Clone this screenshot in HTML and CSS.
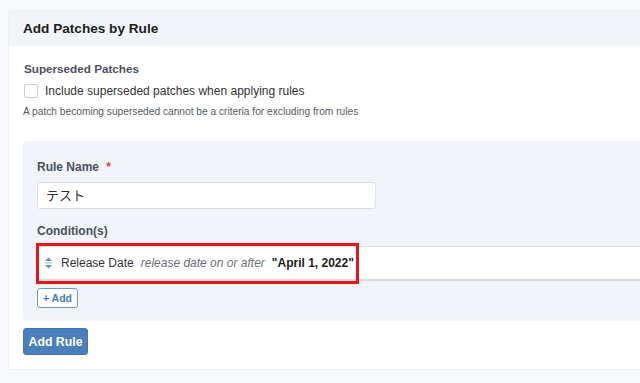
FILE: index.html
```html
<!DOCTYPE html>
<html lang="en">

<head>
    <meta charset="UTF-8">
    <meta name="viewport" content="width=device-width, initial-scale=1.0">
    <title>Add Patches by Rule</title>
    <link rel="stylesheet" href="styles.css">
</head>

<body>
    <div class="card">
        <div class="card-header">Add Patches by Rule</div>
        <div class="card-body">
            <div class="section-title">Superseded Patches</div>
            <label class="check-row">
                <span class="checkbox"></span>
                Include superseded patches when applying rules
            </label>
            <div class="help">A patch becoming superseded cannot be a criteria for excluding from rules</div>

            <div class="rule-panel">
                <div class="field-label">Rule Name <span class="required">*</span></div>
                <div class="text-input">テスト</div>

                <div class="field-label cond-label">Condition(s)</div>
                <div class="condition">
                    <svg class="sort-icon" width="9" height="12" viewBox="0 0 9 12">
                        <path d="M4.5 0.5 L8 4 L1 4 Z" fill="#5b8fd0"/>
                        <rect x="1" y="5.5" width="7" height="1" fill="#9dbbe3"/>
                        <path d="M1 8 L8 8 L4.5 11.5 Z" fill="#5b8fd0"/>
                    </svg>
                    <span class="cond-field">Release Date</span>
                    <span class="cond-op">release date on or after</span>
                    <span class="cond-value">"April 1, 2022"</span>
                    <div class="highlight"></div>
                </div>
                <button class="btn-add">+ Add</button>
            </div>

            <button class="btn-primary">Add Rule</button>
        </div>
    </div>
</body>

</html>
```

FILE: styles.css
```css
html, body {
    margin: 0;
    padding: 0;
    overflow: hidden;
}

body {
    background: #f8f9fc;
    font-family: "Liberation Sans", Arial, "Noto Sans CJK JP", sans-serif;
    color: #333;
    padding: 10px 0 0 8px;
}

.card {
    background: white;
    border: 1px solid #edf0f5;
    border-right: none;
    border-radius: 4px 0 0 4px;
    margin-right: -20px;
}

.card-header {
    background: #f1f4f8;
    height: 35px;
    line-height: 36px;
    padding-left: 14px;
    font-size: 13.6px;
    font-weight: bold;
    color: #1b1d21;
}

.card-body {
    padding: 15px 0 14px 14px;
}

.section-title {
    font-size: 11.7px;
    line-height: 16px;
    font-weight: bold;
    color: #4a5160;
    margin-left: 1px;
}

.check-row {
    display: flex;
    align-items: center;
    gap: 7px;
    margin-top: 5px;
    font-size: 12px;
    line-height: 18px;
    color: #333;
    margin-left: 1px;
}

.checkbox {
    width: 12px;
    height: 12px;
    border: 1px solid #c9ced6;
    border-radius: 2px;
    background: white;
}

.help {
    margin-top: 5px;
    font-size: 10.2px;
    line-height: 14px;
    color: #555b63;
}

.rule-panel {
    margin-top: 22px;
    background: #f1f4f8;
    border-radius: 4px 0 0 4px;
    padding: 18px 0 13px 14px;
}

.field-label {
    font-size: 12px;
    line-height: 16px;
    font-weight: bold;
    color: #4a5160;
}

.required {
    color: #e0413f;
    margin-left: 4px;
}

.text-input {
    margin-top: 7px;
    width: 329px;
    height: 25px;
    line-height: 25px;
    padding-left: 8px;
    background: white;
    border: 1px solid #dbe1ea;
    border-radius: 3px;
    font-size: 13px;
    color: #333;
}

.cond-label {
    margin-top: 14px;
}

.condition {
    position: relative;
    margin-top: 7px;
    height: 32px;
    background: white;
    border-top: 1px solid #dde3ea;
    border-bottom: 2px solid #d5dce6;
    display: flex;
    align-items: center;
    padding-left: 7px;
    font-size: 12px;
    white-space: nowrap;
}

.sort-icon {
    margin-right: 8px;
}

.cond-field {
    color: #333;
    margin-right: 7px;
}

.cond-op {
    font-style: italic;
    color: #6b7079;
    margin-right: 7px;
}

.cond-value {
    font-weight: bold;
    color: #1b1d21;
}

.highlight {
    position: absolute;
    left: -1px;
    top: -4px;
    width: 317px;
    height: 35px;
    border: 3px solid #e8141a;
    pointer-events: none;
}

.btn-add {
    display: block;
    margin-top: 7px;
    height: 20px;
    width: 41px;
    padding: 0;
    background: white;
    border: 1px solid #6f98c8;
    border-radius: 3px;
    font-family: inherit;
    font-size: 10.5px;
    font-weight: bold;
    color: #4a7cb8;
}

.btn-primary {
    display: block;
    margin-top: 7px;
    height: 27px;
    width: 65px;
    padding: 0;
    background: #4a7fbc;
    border: 1px solid #4276b2;
    border-radius: 3px;
    font-family: inherit;
    font-size: 12.3px;
    font-weight: bold;
    color: white;
}
```
